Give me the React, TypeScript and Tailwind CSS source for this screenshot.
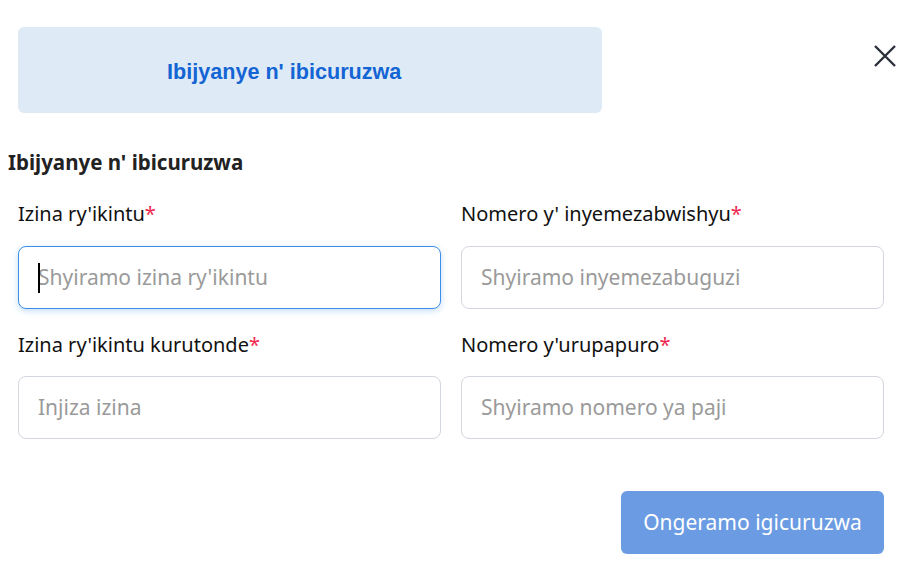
import React from "react";

const font = { fontFamily: "'Noto Sans', sans-serif" };

function Label({ text }: { text: string }) {
  return (
    <div className="h-6 text-[20px] leading-6 text-[#111]">
      {text}
      <span className="text-[#f0264f]">*</span>
    </div>
  );
}

function Field({ placeholder, focused }: { placeholder: string; focused?: boolean }) {
  return (
    <div
      className={
        "relative h-[63px] rounded-[8px] border bg-white flex items-center px-[19px] " +
        (focused
          ? "border-[#3a8ee6] shadow-[0_2px_6px_rgba(58,142,230,0.3)]"
          : "border-[#d3d7de]")
      }
    >
      {focused && <span className="absolute left-[19px] top-[16px] h-[30px] w-[2px] bg-black" />}
      <span className="text-[21px] text-[#9a9a9a]">{placeholder}</span>
    </div>
  );
}

export default function App() {
  return (
    <div className="w-[920px] h-[568px] bg-white" style={font}>
      <div className="flex items-start pt-[27px] pl-[18px]">
        <div className="w-[584px] h-[86px] rounded-[6px] bg-[#deebf7] flex items-center pl-[149px] pt-[4px]">
          <span
            className="text-[21.6px] font-bold text-[#1464d4]"
            style={{ fontFamily: "'Liberation Sans', Arial, sans-serif" }}
          >
            Ibijyanye n' ibicuruzwa
          </span>
        </div>
        <div className="ml-[272px] mt-[18px]">
          <svg width="22" height="22" viewBox="0 0 22 22" fill="none">
            <path d="M1 1L21 21M21 1L1 21" stroke="#2b303a" strokeWidth="2.4" />
          </svg>
        </div>
      </div>

      <div className="mt-[35px] pl-[8px] text-[20.5px] leading-7 font-bold text-[#222]">
        Ibijyanye n' ibicuruzwa
      </div>

      <div className="mt-[26px] pl-[18px] grid grid-cols-[423px_423px] gap-x-[20px]">
        <div>
          <Label text="Izina ry'ikintu" />
          <div className="mt-[20px]">
            <Field placeholder="Shyiramo izina ry'ikintu" focused />
          </div>
        </div>
        <div>
          <Label text="Nomero y' inyemezabwishyu" />
          <div className="mt-[20px]">
            <Field placeholder="Shyiramo inyemezabuguzi" />
          </div>
        </div>
        <div className="mt-[24px]">
          <Label text="Izina ry'ikintu kurutonde" />
          <div className="mt-[19px]">
            <Field placeholder="Injiza izina" />
          </div>
        </div>
        <div className="mt-[24px]">
          <Label text="Nomero y'urupapuro" />
          <div className="mt-[19px]">
            <Field placeholder="Shyiramo nomero ya paji" />
          </div>
        </div>
      </div>

      <div className="mt-[52px] flex justify-end pr-[36px]">
        <button className="w-[263px] h-[63px] rounded-[6px] bg-[#6b9be2] text-white text-[21px]">
          Ongeramo igicuruzwa
        </button>
      </div>
    </div>
  );
}
